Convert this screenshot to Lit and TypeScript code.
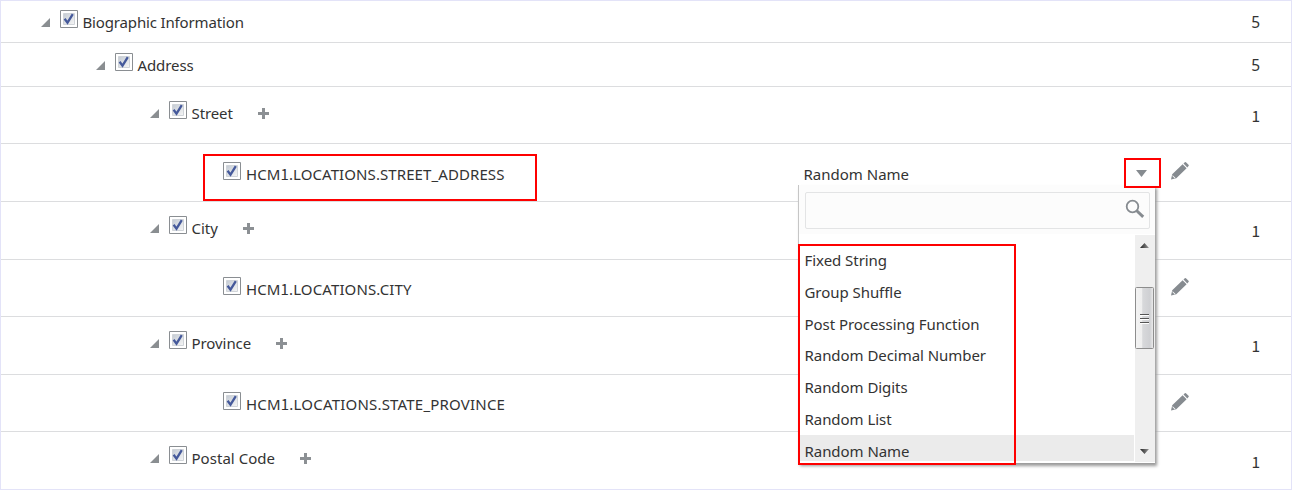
import { LitElement, html, css, svg, nothing } from "lit";
import { customElement } from "lit/decorators.js";

interface Row {
  label: string;
  depth: number;
  height: number;
  top: number;
  spacing: number;
  count?: number;
  countTop?: number;
  add?: boolean;
  edit?: number;
  value?: string;
}

const rows: Row[] = [
  { label: "Biographic Information", depth: 0, height: 42, top: 9, spacing: -0.15, count: 5, countTop: 9 },
  { label: "Address", depth: 1, height: 44, top: 10, spacing: -0.1, count: 5, countTop: 10 },
  { label: "Street", depth: 2, height: 57, top: 14, spacing: -0.1, count: 1, countTop: 16, add: true },
  { label: "HCM1.LOCATIONS.STREET_ADDRESS", depth: 3, height: 58, top: 18, spacing: 0.09, edit: 18, value: "Random Name" },
  { label: "City", depth: 2, height: 58, top: 14, spacing: 0, count: 1, countTop: 16, add: true },
  { label: "HCM1.LOCATIONS.CITY", depth: 3, height: 57, top: 17, spacing: 0.12, edit: 18 },
  { label: "Province", depth: 2, height: 58, top: 14, spacing: -0.07, count: 1, countTop: 16, add: true },
  { label: "HCM1.LOCATIONS.STATE_PROVINCE", depth: 3, height: 57, top: 17, spacing: 0.2, edit: 18 },
  { label: "Postal Code", depth: 2, height: 57, top: 14, spacing: 0.04, count: 1, countTop: 17, add: true },
];

const options = [
  "Fixed String", "Group Shuffle", "Post Processing Function", "Random Decimal Number",
  "Random Digits", "Random List", "Random Name",
];

const check = svg`<svg class="box" viewBox="0 0 18 18"><defs><linearGradient id="g" x1="0" y1="0" x2="1" y2="1"><stop offset="0" stop-color="#c3cad3"/><stop offset="1" stop-color="#f6f6f6"/></linearGradient></defs><path fill="#fff" stroke="#8a8e92" d="M.5.5h17v17H.5z"/><path fill="url(#g)" stroke="#d0d4d9" d="M3.5 3.5h11v11h-11z"/><path d="M4.6 8.800 7.500 12.700 12.800 4.200" fill="none" stroke="#45599b" stroke-width="2.300"/></svg>`;
const pencil = svg`<svg viewBox="0 0 18 18"><path fill="#868b90" d="M0 17.5 1.2 12.3 11.6 2.2l4 4L5.3 16.2zM12.5 1.4 13.8.3q.7-.5 1.4.1l2.3 2.3q.6.7 0 1.4l-1.2 1.3z"/><path fill="#fff" d="m1.7 13.3 2.8 2.8-.6.4-2.6-2.6z"/></svg>`;

@customElement("app-root")
export class AppRoot extends LitElement {
  static styles = css`
    :host { display: block; position: relative; width: 1292px; height: 490px; overflow: hidden; box-sizing: border-box; background: #fff; border: 1px solid #e3e3f8; font: 15px/20px "Noto Sans", "Open Sans", sans-serif; color: #333; }
    svg { display: block; }
    .row { display: grid; grid-template-columns: 797px 373px 1fr; box-sizing: border-box; border-bottom: 1px solid #dcdddf; }
    .row:nth-child(9) { border-bottom: 0; }
    .name { display: flex; align-items: flex-start; white-space: pre; }
    .twist { width: 9px; height: 9px; margin: 8px 10px 0 1px; fill: #8a8e91; flex: none; }
    .gap { width: 20px; flex: none; }
    .box { width: 18px; height: 18px; flex: none; margin-right: 4.5px; }
    .leaf .box { margin-right: 5px; }
    .label { padding-top: 2px; }
    .add { width: 11px; height: 11px; margin: 7px 0 0 25px; fill: #8c9094; }
    .value { display: flex; justify-content: space-between; padding: 20px 24px 0 5.5px; white-space: pre; }
    .drop { width: 11px; height: 7px; margin-top: 6px; fill: #868b90; }
    .end { display: flex; justify-content: space-between; align-items: flex-start; padding-right: 31px; }
    .edit { width: 18px; height: 18px; }
    .count { padding-top: 2px; margin-left: auto; font-size: 15.5px; }
    .one { font-family: "Noto Sans CJK JP", sans-serif; }
    .panel { position: absolute; left: 797px; top: 184px; width: 357px; height: 278px; box-sizing: border-box; border-left: 1px solid #c6c6c6; background: #fff; box-shadow: 2px 3px 3px #999; display: flex; flex-direction: column; }
    .head { background: #fcfcfc; padding: 7px 5px 0 6px; height: 49px; box-sizing: border-box; flex: none; }
    .search { height: 37px; box-sizing: border-box; border: 1px solid #e3e4e5; border-radius: 2px; display: flex; justify-content: flex-end; padding: 6px 4px 0 0; }
    .search svg { width: 20px; height: 20px; }
    .body { display: flex; height: 228px; }
    .list { width: 335px; padding-top: 10px; box-sizing: border-box; overflow: hidden; height: 227px; white-space: pre; letter-spacing: -0.05px; }
    .option { height: 31.8px; box-sizing: border-box; padding: 6px 0 0 5.5px; }
    .selected { background: #ebebeb; }
    .bar { margin: 1px 0 0 1px; width: 20px; height: 227px; flex: none; }
    .mark { position: absolute; box-sizing: border-box; border: 2px solid #fe0000; }
    .mark-name { left: 202px; top: 153px; width: 334px; height: 47px; }
    .mark-drop { left: 1123px; top: 157px; width: 37px; height: 30px; }
    .mark-list { left: 797px; top: 243px; width: 218px; height: 221px; }
  `;

  private text(label: string) {
    const i = label.indexOf("1");
    return i < 0 ? label : html`${label.slice(0, i)}<span class="one">1</span>${label.slice(i + 1)}`;
  }

  private row(r: Row) {
    const leaf = r.depth === 3;
    const left = [39, 94, 148, 202][r.depth];
    return html`<div class="row" style="height:${r.height}px">
      <div class="name ${leaf ? "leaf" : ""}" style="padding:${r.top}px 0 0 ${left}px">${leaf ? html`<span class="gap"></span>` : svg`<svg class="twist" viewBox="0 0 10 10"><path d="M10 0v10H0z"/></svg>`}${check}<span class="label" style="letter-spacing:${r.spacing}px">${this.text(r.label)}</span>${r.add ? svg`<svg class="add" viewBox="0 0 11 11"><path d="M4 0h3v4h4v3H7v4H4V7H0V4h4z"/></svg>` : nothing}</div>
      <div>${r.value ? html`<div class="value"><span>${r.value}</span><svg class="drop" viewBox="0 0 11 7"><path d="M0 0h11L5.5 7z"/></svg></div>` : nothing}</div>
      <div class="end" style="padding-top:${r.countTop ?? r.edit ?? 0}px">${r.edit ? html`<span class="edit">${pencil}</span>` : nothing}${r.count ? html`<span class="count">${this.text(String(r.count))}</span>` : nothing}</div>
    </div>`;
  }

  render() {
    return html`${rows.map((r) => this.row(r))}
      <section class="panel">
        <div class="head"><div class="search"><svg viewBox="0 0 20 20"><circle cx="7.5" cy="7.5" r="5.8" fill="none" stroke="#868b90" stroke-width="1.8"/><path d="m11.5 11.5 6.7 6.3" stroke="#868b90" stroke-width="3"/></svg></div></div>
        <div class="body">
          <div class="list">${options.map((o, i) => html`<div class="option ${i === 6 ? "selected" : ""}">${o}</div>`)}</div>
          <svg class="bar" viewBox="0 0 20 227"><defs><linearGradient id="t"><stop stop-color="#f3f3f3"/><stop offset=".35" stop-color="#efefef"/><stop offset=".4" stop-color="#d8d9db"/><stop offset=".8" stop-color="#cfd0d3"/><stop offset="1" stop-color="#eee"/></linearGradient><linearGradient id="a"><stop stop-color="#222"/><stop offset="1" stop-color="#999"/></linearGradient></defs><path fill="#efefef" d="M0 0h20v227H0z"/><path fill="url(#a)" d="m5 13 4.5-5 4.5 5zM5 214h9l-4.500 5z"/><rect x=".5" y="52.500" width="18" height="61" rx="1" fill="url(#t)" stroke="#8d8d8d"/><path stroke="#555" d="M5 79.500h9M5 83.500h9M5 87.500h9"/><path stroke="#fff" d="M5 80.500h9M5 84.500h9M5 88.500h9"/></svg>
        </div>
      </section>
      <div class="mark mark-name"></div><div class="mark mark-drop"></div><div class="mark mark-list"></div>`;
  }
}
